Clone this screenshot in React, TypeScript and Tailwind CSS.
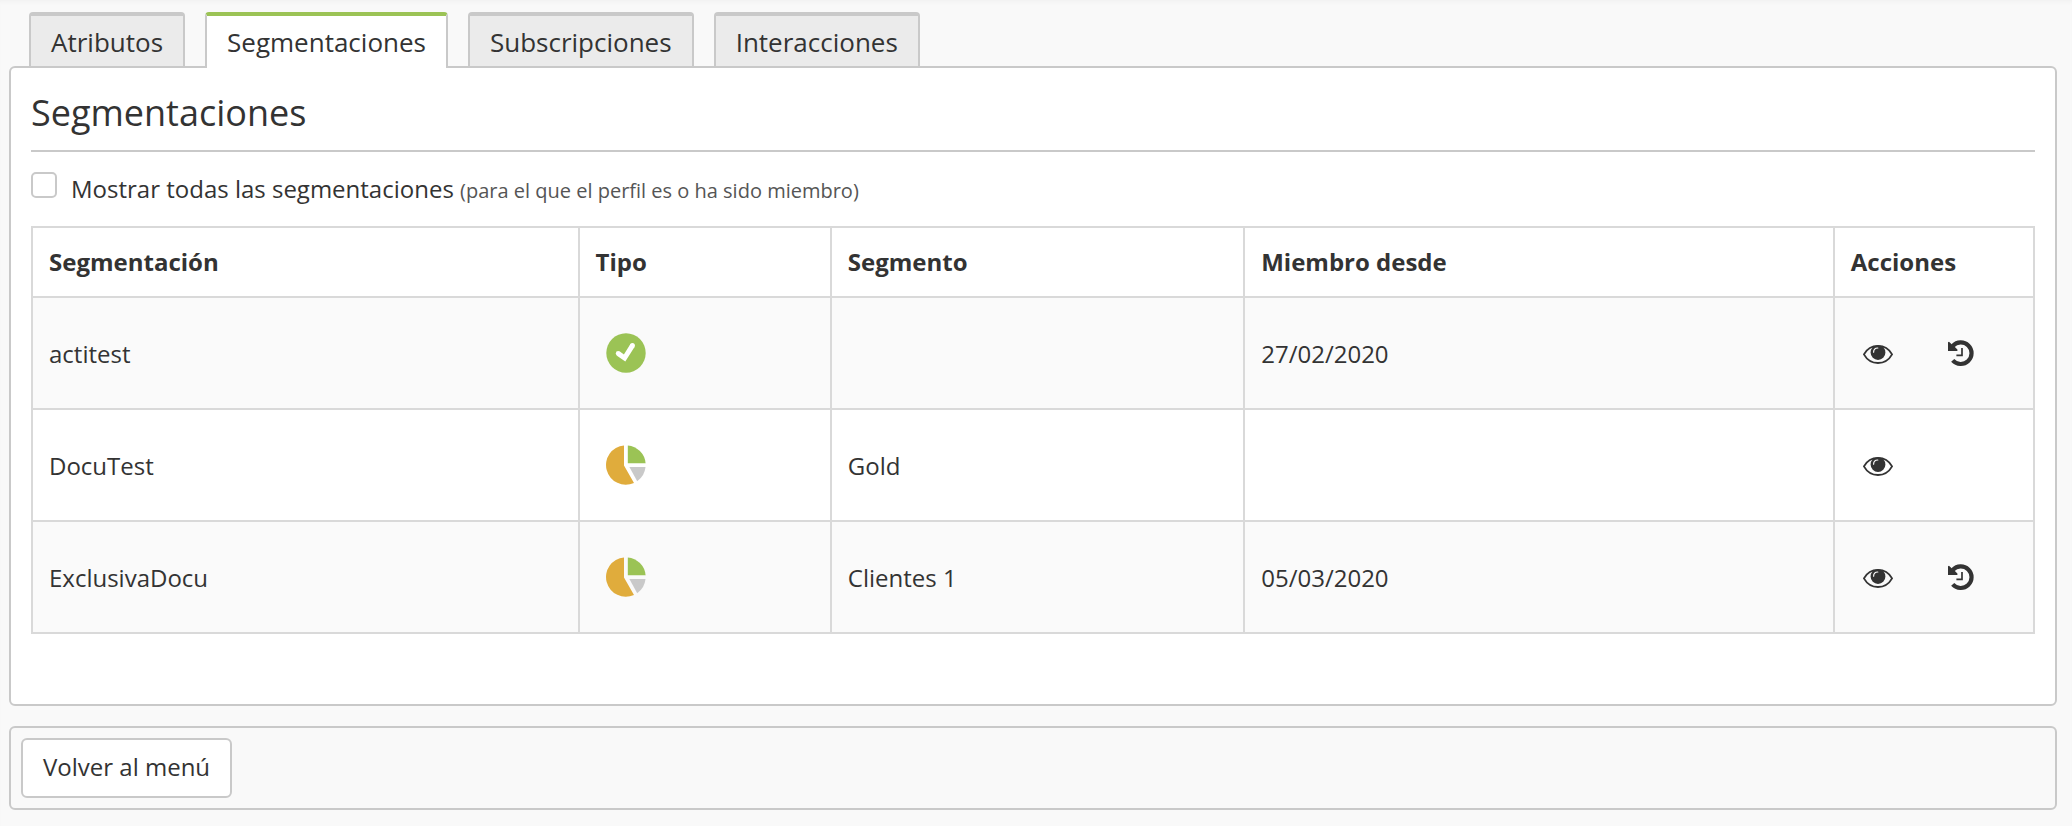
import React, { FC, useState } from "react";

type SegmentType = "check" | "pie";

interface Segmentation {
  name: string;
  type: SegmentType;
  segment: string;
  memberSince: string;
}

const TABS = ["Atributos", "Segmentaciones", "Subscripciones", "Interacciones"];

const SEGMENTATIONS: Segmentation[] = [
  { name: "actitest", type: "check", segment: "", memberSince: "27/02/2020" },
  { name: "DocuTest", type: "pie", segment: "Gold", memberSince: "" },
  { name: "ExclusivaDocu", type: "pie", segment: "Clientes 1", memberSince: "05/03/2020" },
];

const CheckIcon: FC = () => (
  <svg width="40" height="40" viewBox="0 0 40 40" role="img" aria-label="Activa">
    <circle cx="20" cy="20" r="19.7" fill="#9bc355" />
    <path d="M12.4 20.6 L18.6 25 L26.4 12.6" fill="none" stroke="#fff" strokeWidth="5" />
    <circle cx="12.2" cy="20.5" r="2.4" fill="#fff" />
    <circle cx="26.4" cy="12.6" r="2.5" fill="#fff" />
  </svg>
);

const PieIcon: FC = () => (
  <svg width="40" height="40" viewBox="0 0 40 40" role="img" aria-label="Exclusiva">
    <path d="M18 0.4 V20.6 L28 37.9 A19.7 19.7 0 1 1 18 0.4 Z" fill="#e0ac3c" />
    <path d="M21.8 0.4 A19.7 19.7 0 0 1 39.6 18.2 H21.8 Z" fill="#9bc355" />
    <path d="M23.4 22 H39.5 A19.7 19.7 0 0 1 31.2 36.2 Z" fill="#c9c9c9" />
  </svg>
);

const EyeIcon: FC = () => (
  <svg width="32" height="32" viewBox="0 0 32 32" aria-hidden="true">
    <path
      d="M1.9 17.4 C5 11.9 10.2 8.9 16 8.9 C21.8 8.9 27 11.9 30.1 17.4 C27 22.9 21.8 26 16 26 C10.2 26 5 22.9 1.9 17.4 Z"
      fill="none"
      stroke="#333"
      strokeWidth="1.8"
      strokeLinejoin="round"
    />
    <circle cx="16" cy="15.6" r="7.4" fill="#333" />
    <path d="M11.6 15.2 C11.6 12.8 13.2 11.1 15.8 11" fill="none" stroke="#fafafa" strokeWidth="1.2" strokeLinecap="round" />
  </svg>
);

const HistoryIcon: FC = () => (
  <svg width="32" height="32" viewBox="0 0 32 32" aria-hidden="true">
    <path d="M7.8 8.9 A10.8 10.8 0 1 1 7.7 23.4" fill="none" stroke="#333" strokeWidth="4.2" />
    <path d="M3 5.2 L4 4.8 L6.4 7 L9.4 9.4 L12.4 12.6 V14 H3 Z" fill="#333" />
    <path d="M17 11 V18.4 H11.4" fill="none" stroke="#333" strokeWidth="1.7" />
  </svg>
);

const App: FC = () => {
  const [activeTab, setActiveTab] = useState("Segmentaciones");
  const [showAll, setShowAll] = useState(false);

  return (
    <div className="min-h-screen bg-[#f9f9f9] pt-3 pr-[15px] pb-4 pl-[9px] font-['Open_Sans',sans-serif] text-2xl text-[#333] shadow-[inset_0_4px_4px_-2px_rgba(0,0,0,0.03)]">
      <div className="flex gap-5 px-5" role="tablist">
        {TABS.map((tab) => (
          <button
            key={tab}
            type="button"
            role="tab"
            aria-selected={tab === activeTab}
            onClick={() => setActiveTab(tab)}
            className={
              tab === activeTab
                ? "relative -mb-[2px] rounded-t-[4px] border-x-2 border-t-4 border-x-[#c9c9c9] border-t-[#9bc355] bg-white px-5 pt-2 pb-2 text-[26px] leading-9"
                : "rounded-t-[4px] border-x-2 border-t-4 border-[#c9c9c9] bg-[#ebebeb] px-5 pt-2 pb-1.5 text-[26px] leading-9"
            }
          >
            {tab}
          </button>
        ))}
      </div>

      <main className="rounded-md border-2 border-[#c9c9c9] bg-white px-5 pt-5 pb-[70px]">
        <h1 className="border-b-2 border-[#c9c9c9] pb-3 text-4xl leading-[50px]">Segmentaciones</h1>

        <div className="my-5 flex items-start gap-3.5">
          <input
            id="show-all"
            type="checkbox"
            checked={showAll}
            onChange={(e) => setShowAll(e.target.checked)}
            className="size-[26px] shrink-0 appearance-none rounded-[5px] border-2 border-[#c9c9c9] bg-white checked:bg-[#9bc355]"
          />
          <label htmlFor="show-all" className="leading-[34px]">
            Mostrar todas las segmentaciones{" "}
            <small className="text-xl leading-none text-[#555]">(para el que el perfil es o ha sido miembro)</small>
          </label>
        </div>

        <table className="w-full table-fixed border-collapse text-left">
          <colgroup>
            <col className="w-[27.3%]" />
            <col className="w-[12.6%]" />
            <col className="w-[20.65%]" />
            <col className="w-[29.45%]" />
            <col className="w-[10%]" />
          </colgroup>
          <thead>
            <tr className="h-[70px]">
              {["Segmentación", "Tipo", "Segmento", "Miembro desde", "Acciones"].map((title) => (
                <th key={title} scope="col" className="border-2 border-[#d9d9d9] px-4 font-bold">
                  {title}
                </th>
              ))}
            </tr>
          </thead>
          <tbody>
            {SEGMENTATIONS.map((row) => (
              <tr key={row.name} className="h-28 odd:bg-[#fafafa]">
                <td className="border-2 border-[#d9d9d9] px-4 pt-0.5">{row.name}</td>
                <td className="border-2 border-[#d9d9d9] px-[26px]">
                  {row.type === "check" ? <CheckIcon /> : <PieIcon />}
                </td>
                <td className="border-2 border-[#d9d9d9] px-4 pt-0.5">{row.segment}</td>
                <td className="border-2 border-[#d9d9d9] px-4 pt-0.5">{row.memberSince}</td>
                <td className="border-2 border-[#d9d9d9] px-[17px]">
                  <div className="flex gap-[31px]">
                    <button type="button" aria-label="Ver" className="p-2.5">
                      <EyeIcon />
                    </button>
                    {/* only memberships with a start date have a history */}
                    {row.memberSince && (
                      <button type="button" aria-label="Historial" className="p-2.5">
                        <HistoryIcon />
                      </button>
                    )}
                  </div>
                </td>
              </tr>
            ))}
          </tbody>
        </table>
      </main>

      <footer className="mt-5 flex rounded-md border-2 border-[#c9c9c9] p-2.5">
        <button type="button" className="rounded-md border-2 border-[#c9c9c9] bg-white px-5 pt-[11px] pb-[13px]">
          Volver al menú
        </button>
      </footer>
    </div>
  );
};

export default App;
